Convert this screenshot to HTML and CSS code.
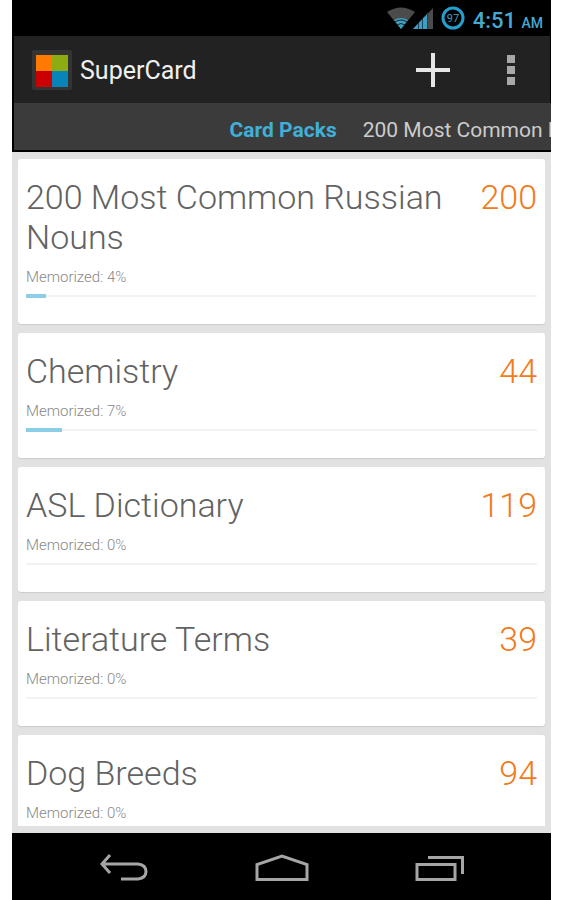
FILE: index.html
```html
<!DOCTYPE html>
<html lang="en">
<head>
    <meta charset="UTF-8">
    <meta name="viewport" content="width=device-width, initial-scale=1.0">
    <link rel="stylesheet" href="styles.css">
    <title>SuperCard</title>
</head>
<body>
    <div class="phone">
        <div class="status-bar">
            <svg class="signals" width="46" height="22" viewBox="0 0 46 22">
                <path fill="#4b4b4b" d="M0 5Q14-4 28 5L14 22Z"/>
                <path fill="#3d9fc4" d="M7 13Q14 9 21 13L14 22Z"/>
                <path fill="none" stroke="#222" d="M8 15Q14 11 20 15M10 18Q14 15 18 18"/>
                <path fill="#4b4b4b" d="M46 1V22H26Z"/>
                <path fill="#3d9fc4" d="M41 6V22H26Z"/>
                <path stroke="#17465a" d="M31.500 16V22M35.500 12V22M40.500 7V22"/>
            </svg>
            <svg class="battery" width="24" height="24" viewBox="0 0 24 24">
                <circle cx="12" cy="12" r="10" fill="none" stroke="#249fce" stroke-width="3"/>
                <text class="battery-level" x="12" y="16" text-anchor="middle">97</text>
            </svg>
            <div class="clock">4:51 <span class="ampm">AM</span></div>
        </div>

        <header class="action-bar">
            <svg class="logo" width="40" height="40" viewBox="0 0 40 40">
                <rect width="40" height="40" rx="2" fill="#343434"/>
                <path fill="#ff7a00" d="M4 5H20V21H4Z"/>
                <path fill="#8cac12" d="M20 5H36V21H20Z"/>
                <path fill="#cb0000" d="M4 21H20V37H4Z"/>
                <path fill="#0884b8" d="M20 21H36V37H20Z"/>
            </svg>
            <h1 class="app-name">SuperCard</h1>
            <button class="icon-button" aria-label="Add">
                <svg width="34" height="34" viewBox="0 0 34 34">
                    <path stroke="#e6e6e6" stroke-width="4" d="M17 0V34M0 17H34"/>
                </svg>
            </button>
            <button class="icon-button" aria-label="More options">
                <svg width="8" height="30" viewBox="0 0 8 30">
                    <path fill="#a8a8a8" d="M0 0H8V8H0ZM0 11H8V19H0ZM0 22H8V30H0Z"/>
                </svg>
            </button>
        </header>

        <nav class="tabs">
            <a class="tab tab-active" href="#packs">Card Packs</a>
            <a class="tab" href="#russian">200 Most Common Russian Nouns</a>
        </nav>

        <main class="content">
            <div class="pack-list" id="packs">
                <div class="card" id="russian">
                    <div class="card-top">
                        <h2 class="card-title">200 Most Common Russian Nouns</h2>
                        <span class="card-count">200</span>
                    </div>
                    <div class="memorized">Memorized: 4%</div>
                    <div class="progress"><div class="progress-fill" style="width: 4%;"></div></div>
                </div>
                <div class="card">
                    <div class="card-top">
                        <h2 class="card-title">Chemistry</h2>
                        <span class="card-count">44</span>
                    </div>
                    <div class="memorized">Memorized: 7%</div>
                    <div class="progress"><div class="progress-fill" style="width: 7%;"></div></div>
                </div>
                <div class="card">
                    <div class="card-top">
                        <h2 class="card-title">ASL Dictionary</h2>
                        <span class="card-count">119</span>
                    </div>
                    <div class="memorized">Memorized: 0%</div>
                    <div class="progress"><div class="progress-fill" style="width: 0%;"></div></div>
                </div>
                <div class="card">
                    <div class="card-top">
                        <h2 class="card-title">Literature Terms</h2>
                        <span class="card-count">39</span>
                    </div>
                    <div class="memorized">Memorized: 0%</div>
                    <div class="progress"><div class="progress-fill" style="width: 0%;"></div></div>
                </div>
                <div class="card">
                    <div class="card-top">
                        <h2 class="card-title">Dog Breeds</h2>
                        <span class="card-count">94</span>
                    </div>
                    <div class="memorized">Memorized: 0%</div>
                    <div class="progress"><div class="progress-fill" style="width: 0%;"></div></div>
                </div>
            </div>
        </main>

        <div class="nav-bar">
            <button class="nav-button" aria-label="Back">
                <svg width="50" height="28" viewBox="0 0 50 28">
                    <path fill="none" stroke="#a6a6a6" stroke-width="3" d="M11 1L3 10L11 19M3 10H39Q47 11 47 17.500Q47 24 39 25H22"/>
                </svg>
            </button>
            <button class="nav-button" aria-label="Home">
                <svg width="54" height="28" viewBox="0 0 54 28">
                    <path fill="none" stroke="#a6a6a6" stroke-width="3" d="M2 25.500V10.500L27 2L52 10.500V25.500Z"/>
                </svg>
            </button>
            <button class="nav-button" aria-label="Recent apps">
                <svg width="50" height="28" viewBox="0 0 50 28">
                    <path fill="none" stroke="#a6a6a6" stroke-width="3" d="M2 10.500H40V25.500H2ZM13 3.500H47.500V20"/>
                </svg>
            </button>
        </div>
    </div>
</body>
</html>
```
FILE: styles.css
```css
* {
    box-sizing: border-box;
}

body {
    margin: 0;
    background: white;
    font-family: Roboto, "Liberation Sans", sans-serif;
}

button {
    border: none;
    padding: 0;
    background: none;
    cursor: pointer;
}

svg {
    display: block;
}

.phone {
    display: flex;
    flex-direction: column;
    height: 100vh;
    margin: 0 12px;
    background: black;
}

.status-bar {
    display: flex;
    align-items: center;
    justify-content: flex-end;
    height: 36px;
    padding-right: 8px;
    flex-shrink: 0;
}

.battery {
    margin: 0 8px;
}

.battery-level {
    fill: #3d9fc4;
    font-size: 11px;
}

.clock {
    padding-top: 4px;
    color: #45aad2;
    font-size: 22px;
    font-weight: 500;
    white-space: nowrap;
}

.ampm {
    font-size: 14px;
}

.action-bar {
    display: flex;
    align-items: center;
    height: 67px;
    margin: 0 1px 0 2px;
    padding-left: 18px;
    background: #222;
    flex-shrink: 0;
}

.app-name {
    flex: 1;
    margin: 0;
    padding: 2px 0 0 8px;
    color: #f0f0f0;
    font-size: 25px;
    font-weight: 400;
}

.icon-button {
    display: flex;
    align-items: center;
    justify-content: center;
    width: 78px;
    height: 100%;
}

.tabs {
    display: flex;
    gap: 26px;
    height: 49px;
    margin-left: 2px;
    padding-left: 40%;
    border-bottom: 2px solid black;
    background: #3b3b3b;
    line-height: 54px;
    overflow: hidden;
    flex-shrink: 0;
}

.tab {
    color: #ccc;
    font-size: 21px;
    text-decoration: none;
    white-space: nowrap;
}

.tab-active {
    color: #3fb0d8;
    font-weight: 700;
}

.content {
    flex: 1;
    min-height: 0;
    padding: 7px 6px;
    background: #e2e2e2;
}

.pack-list {
    display: flex;
    flex-direction: column;
    gap: 9px;
    height: 100%;
    overflow: hidden;
}

.card {
    padding: 18px 8px 26px;
    border-radius: 3px;
    background: white;
    box-shadow: 0 1px 1px #ccc;
    flex-shrink: 0;
}

.card-top {
    display: flex;
    justify-content: space-between;
    gap: 24px;
    font-size: 34px;
    line-height: 40px;
}

.card-title {
    margin: 0;
    color: #626262;
    font-size: 34px;
    font-weight: 300;
}

.card-count {
    color: #f07a1c;
    font-weight: 300;
}

.memorized {
    margin-top: 10px;
    color: #888;
    font-size: 15px;
    font-weight: 300;
    line-height: 20px;
}

.progress {
    height: 4px;
    margin-top: 7px;
    background: linear-gradient(#f2f2f2, #f2f2f2) center / 100% 2px no-repeat;
}

.progress-fill {
    height: 100%;
    background: #8ccde8;
}

.nav-bar {
    display: flex;
    justify-content: center;
    height: 67px;
    padding-top: 2px;
    flex-shrink: 0;
}

.nav-button {
    display: flex;
    align-items: center;
    justify-content: center;
    width: 158px;
}
```
